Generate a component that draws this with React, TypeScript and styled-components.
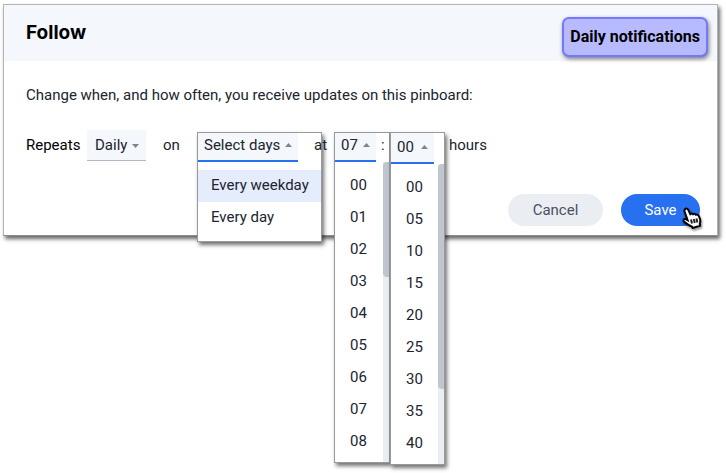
import React from "react";
import styled, { createGlobalStyle } from "styled-components";

const GlobalStyle = createGlobalStyle`
  *, *::before, *::after { box-sizing: border-box; }
  body {
    margin: 0;
    background: #fff;
    color: #20242f;
    font-family: Roboto, "Liberation Sans", sans-serif;
    font-size: 15px;
    line-height: 20px;
  }
  button, select { font: inherit; color: inherit; }
`;

const Page = styled.main`
  display: flow-root;
  min-height: 100vh;
`;

const Dialog = styled.section`
  margin: 4px 8px 0 3px;
  background: #fff;
  border: 1px solid #b4b4b4;
  border-bottom-color: #8c8c8c;
  box-shadow: 2px 3px 4px rgba(0, 0, 0, 0.6);
`;

const Header = styled.header`
  display: flex;
  align-items: center;
  justify-content: space-between;
  padding: 0 9px 0 22px;
  height: 56px;
  background: #f4f7fb;
`;

const Title = styled.h1`
  margin: 0;
  font: 700 19px/24px Inter, sans-serif;
  color: #000;
`;

const Badge = styled.div`
  margin-top: 8px;
  padding: 8px 6px;
  border: 2px solid #7477ff;
  border-radius: 7px;
  background: #b8baff;
  box-shadow: 1px 2px 4px rgba(0, 0, 0, 0.5);
  font: 700 16px/20px Roboto, sans-serif;
  color: #000;
`;

const Body = styled.div`
  padding: 24px 17px 9px 22px;
`;

const Intro = styled.p`
  margin: 0 0 25px;
`;

const Schedule = styled.div`
  display: grid;
  grid-template-columns: 61px 76px 34px 117px 20px 47px 9px 59px auto;
  align-items: start;
  height: 31px;
`;

const Word = styled.span<{ $dark?: boolean }>`
  position: relative;
  z-index: 2;
  line-height: 30px;
  color: ${(p) => (p.$dark ? "#000" : "inherit")};
`;

const SelectBox = styled.span`
  display: flex;
  align-items: center;
  position: relative;
  width: 59px;
`;

const Select = styled.select`
  appearance: none;
  width: 100%;
  height: 31px;
  padding: 0 0 0 8px;
  border: 0;
  border-bottom: 1px solid #b0b8c6;
  border-radius: 0;
  background: #f4f7fb;
`;

const SelectCaret = styled.span`
  display: flex;
  position: absolute;
  right: 7px;
  pointer-events: none;
`;

const Slot = styled.div`
  position: relative;
`;

const Popup = styled.div<{ $width: number }>`
  position: absolute;
  top: 2px;
  left: 0;
  z-index: 1;
  width: ${(p) => p.$width}px;
  background: #fff;
  border: 1px solid #999;
  box-shadow: 2px 3px 4px rgba(0, 0, 0, 0.55);
`;

const Trigger = styled.button<{ $width: number; $low?: boolean }>`
  display: flex;
  align-items: center;
  justify-content: space-between;
  width: ${(p) => p.$width}px;
  height: ${(p) => (p.$low ? 31 : 29)}px;
  padding: 0 6px ${(p) => (p.$low ? 2 : 4)}px 6px;
  border: 0;
  border-bottom: 2px solid #2770ef;
  background: #f4f7fb;
  white-space: nowrap;
`;

const Panel = styled.div`
  display: flex;
  justify-content: space-between;
`;

const List = styled.ul<{ $scroll?: boolean }>`
  flex: 1;
  margin: 0;
  padding: 8px 0 ${(p) => (p.$scroll ? 4 : 7)}px;
  list-style: none;
`;

const Option = styled.li<{ $active?: boolean; $inset: number }>`
  padding: 5px 0 7px ${(p) => p.$inset}px;
  background: ${(p) => (p.$active ? "#e5ecfc" : "transparent")};
`;

const Track = styled.div`
  width: 6px;
  background: #eaedf2;
`;

const Thumb = styled.div<{ $length: number }>`
  height: ${(p) => p.$length}px;
  border-radius: 4px 0 0 4px;
  background: #c0c6cf;
`;

const Footer = styled.footer`
  display: flex;
  justify-content: flex-end;
  gap: 18px;
  margin-top: 33px;
`;

const Action = styled.button<{ $primary?: boolean }>`
  position: relative;
  width: ${(p) => (p.$primary ? 79 : 95)}px;
  height: 32px;
  padding: 0;
  border: 0;
  border-radius: 16px;
  background: ${(p) => (p.$primary ? "#2770ef" : "#eaedf2")};
  color: ${(p) => (p.$primary ? "#fff" : "#4a5160")};
`;

const Pointer = styled.svg`
  position: absolute;
  right: -2px;
  bottom: -3px;
  filter: drop-shadow(1px 2px 1px rgba(0, 0, 0, 0.4));
`;

function Caret({ up }: { up?: boolean }) {
  return (
    <svg width="7" height="4" viewBox="0 0 7 4" aria-hidden="true">
      <path d={up ? "M0 4 3.5 0 7 4Z" : "M0 0 3.5 4 7 0Z"} fill="#7c8594" />
    </svg>
  );
}

interface PickerProps {
  label: string;
  value: string;
  options: string[];
  width: number;
  triggerWidth: number;
  inset: number;
  active?: string;
  thumb?: number;
  low?: boolean;
}

function Picker(p: PickerProps) {
  return (
    <Slot>
      <Popup $width={p.width}>
        <Trigger
          type="button"
          aria-label={p.label}
          aria-haspopup="listbox"
          aria-expanded="true"
          $width={p.triggerWidth}
          $low={p.low}
        >
          {p.value}
          <Caret up />
        </Trigger>
        <Panel>
          <List role="listbox" aria-label={p.label} $scroll={!!p.thumb}>
            {p.options.map((o) => (
              <Option
                key={o}
                role="option"
                aria-selected={o === p.active}
                $active={o === p.active}
                $inset={p.inset}
              >
                {o}
              </Option>
            ))}
          </List>
          {p.thumb && (
            <Track>
              <Thumb $length={p.thumb} />
            </Track>
          )}
        </Panel>
      </Popup>
    </Slot>
  );
}

const hours = ["00", "01", "02", "03", "04", "05", "06", "07", "08"];
const minutes = ["00", "05", "10", "15", "20", "25", "30", "35", "40"];

export default function App() {
  return (
    <Page>
      <GlobalStyle />
      <Dialog role="dialog" aria-labelledby="follow-title">
        <Header>
          <Title id="follow-title">Follow</Title>
          <Badge>Daily notifications</Badge>
        </Header>
        <Body>
          <Intro>Change when, and how often, you receive updates on this pinboard:</Intro>
          <Schedule>
            <Word as="label" htmlFor="repeats" $dark>
              Repeats
            </Word>
            <SelectBox>
              <Select id="repeats" defaultValue="Daily">
                <option>Daily</option>
              </Select>
              <SelectCaret>
                <Caret />
              </SelectCaret>
            </SelectBox>
            <Word>on</Word>
            <Picker
              label="Days"
              value="Select days"
              options={["Every weekday", "Every day"]}
              active="Every weekday"
              width={125}
              triggerWidth={100}
              inset={13}
            />
            <Word>at</Word>
            <Picker label="Hour" value="07" options={hours} width={56} triggerWidth={41} inset={15} thumb={115} />
            <Word>:</Word>
            <Picker label="Minutes" value="00" options={minutes} width={55} triggerWidth={43} inset={15} thumb={225} low />
            <Word>hours</Word>
          </Schedule>
          <Footer>
            <Action type="button">Cancel</Action>
            <Action type="button" $primary>
              Save
              <Pointer width="20" height="22" viewBox="0 0 20 22" aria-hidden="true">
                <path
                  d="M3 2.2c1.300-1.300 2.800-.6 3.400.8l1.900 4.200c1-.9 2.200-.8 2.800.1 1-.8 2.200-.5 2.800.5 1.200-.6 2.300-.1 2.800.9l1.300 3.300c.6 1.800.3 3.400-.3 5l.5 1.700-7.500 2.300-1-1.600c-2.500-.7-5-2.500-7.500-4.500-1.700-1.500-.1-3.500 1.900-2.600l1.500.8L2.700 5c-.4-1-.4-2 .3-2.800Z"
                  fill="#fff"
                  stroke="#000"
                  strokeWidth="2"
                />
                <path d="m9 12.500 1 4M11.800 12l1 4M14.500 11.500l.8 4" stroke="#222" strokeWidth="2" />
              </Pointer>
            </Action>
          </Footer>
        </Body>
      </Dialog>
    </Page>
  );
}
